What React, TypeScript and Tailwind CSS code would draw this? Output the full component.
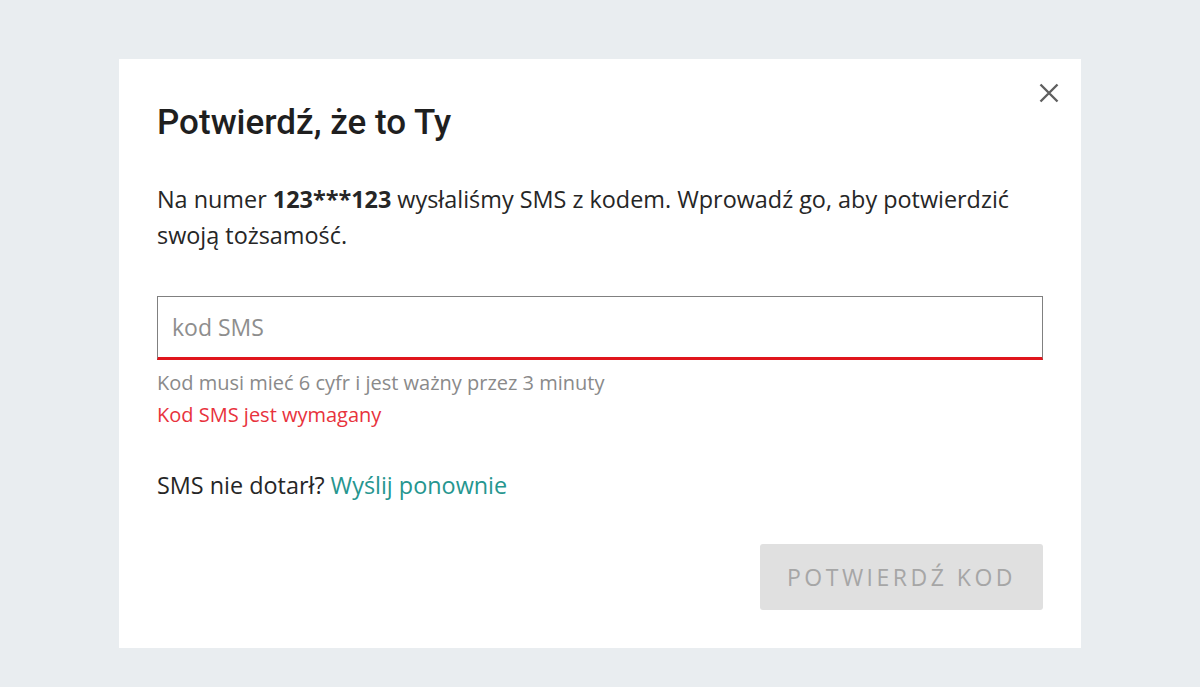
export default function App() {
  return (
    <div className="flex min-h-[687px] w-full justify-center bg-[#e9edf0] pt-[59px]">
      <div className="relative h-[589px] w-[962px] bg-white px-[38px] pt-[44px] font-['Open_Sans',sans-serif] text-[#262626]">
        <button
          type="button"
          aria-label="Zamknij"
          className="absolute top-[24px] right-[22px] flex text-[#5f5f5f]"
        >
          <svg width="20" height="20" viewBox="0 0 20 20" fill="none" stroke="currentColor" strokeWidth="2.4">
            <path d="M1.5 1.5 L18.5 18.5 M18.5 1.5 L1.5 18.5" />
          </svg>
        </button>
        <h1 className="font-['Roboto',sans-serif] text-[35px] leading-[40px] font-medium text-[#1f1f1f]">
          Potwierdź, że to Ty
        </h1>
        <p className="mt-[38px] text-[23.4px] leading-[36px]">
          Na numer <span className="font-bold">123***123</span> wysłaliśmy SMS z kodem. Wprowadź go, aby potwierdzić swoją tożsamość.
        </p>
        <div className="mt-[43px]">
          <input
            type="text"
            placeholder="kod SMS"
            className="h-[64px] w-full border border-b-[3px] border-[#808080] border-b-[#e0161d] px-[14px] text-[23px] text-[#262626] outline-none placeholder:text-[#8e8e8e]"
          />
          <p className="mt-[9px] text-[20px] leading-[28px] text-[#8a8a8a]">
            Kod musi mieć 6 cyfr i jest ważny przez 3 minuty
          </p>
          <p className="mt-[4px] text-[20px] leading-[28px] text-[#e8323c]">Kod SMS jest wymagany</p>
        </div>
        <p className="mt-[38px] text-[23.4px] leading-[36px]">
          SMS nie dotarł?{" "}
          <a href="#" className="text-[#26968f]">
            Wyślij ponownie
          </a>
        </p>
        <div className="mt-[41px] flex justify-end">
          <button
            type="button"
            disabled
            className="h-[66px] w-[283px] rounded-[3px] bg-[#e0e0e0] text-[23px] tracking-[3.5px] text-[#a6a6a6] uppercase"
          >
            Potwierdź kod
          </button>
        </div>
      </div>
    </div>
  );
}
